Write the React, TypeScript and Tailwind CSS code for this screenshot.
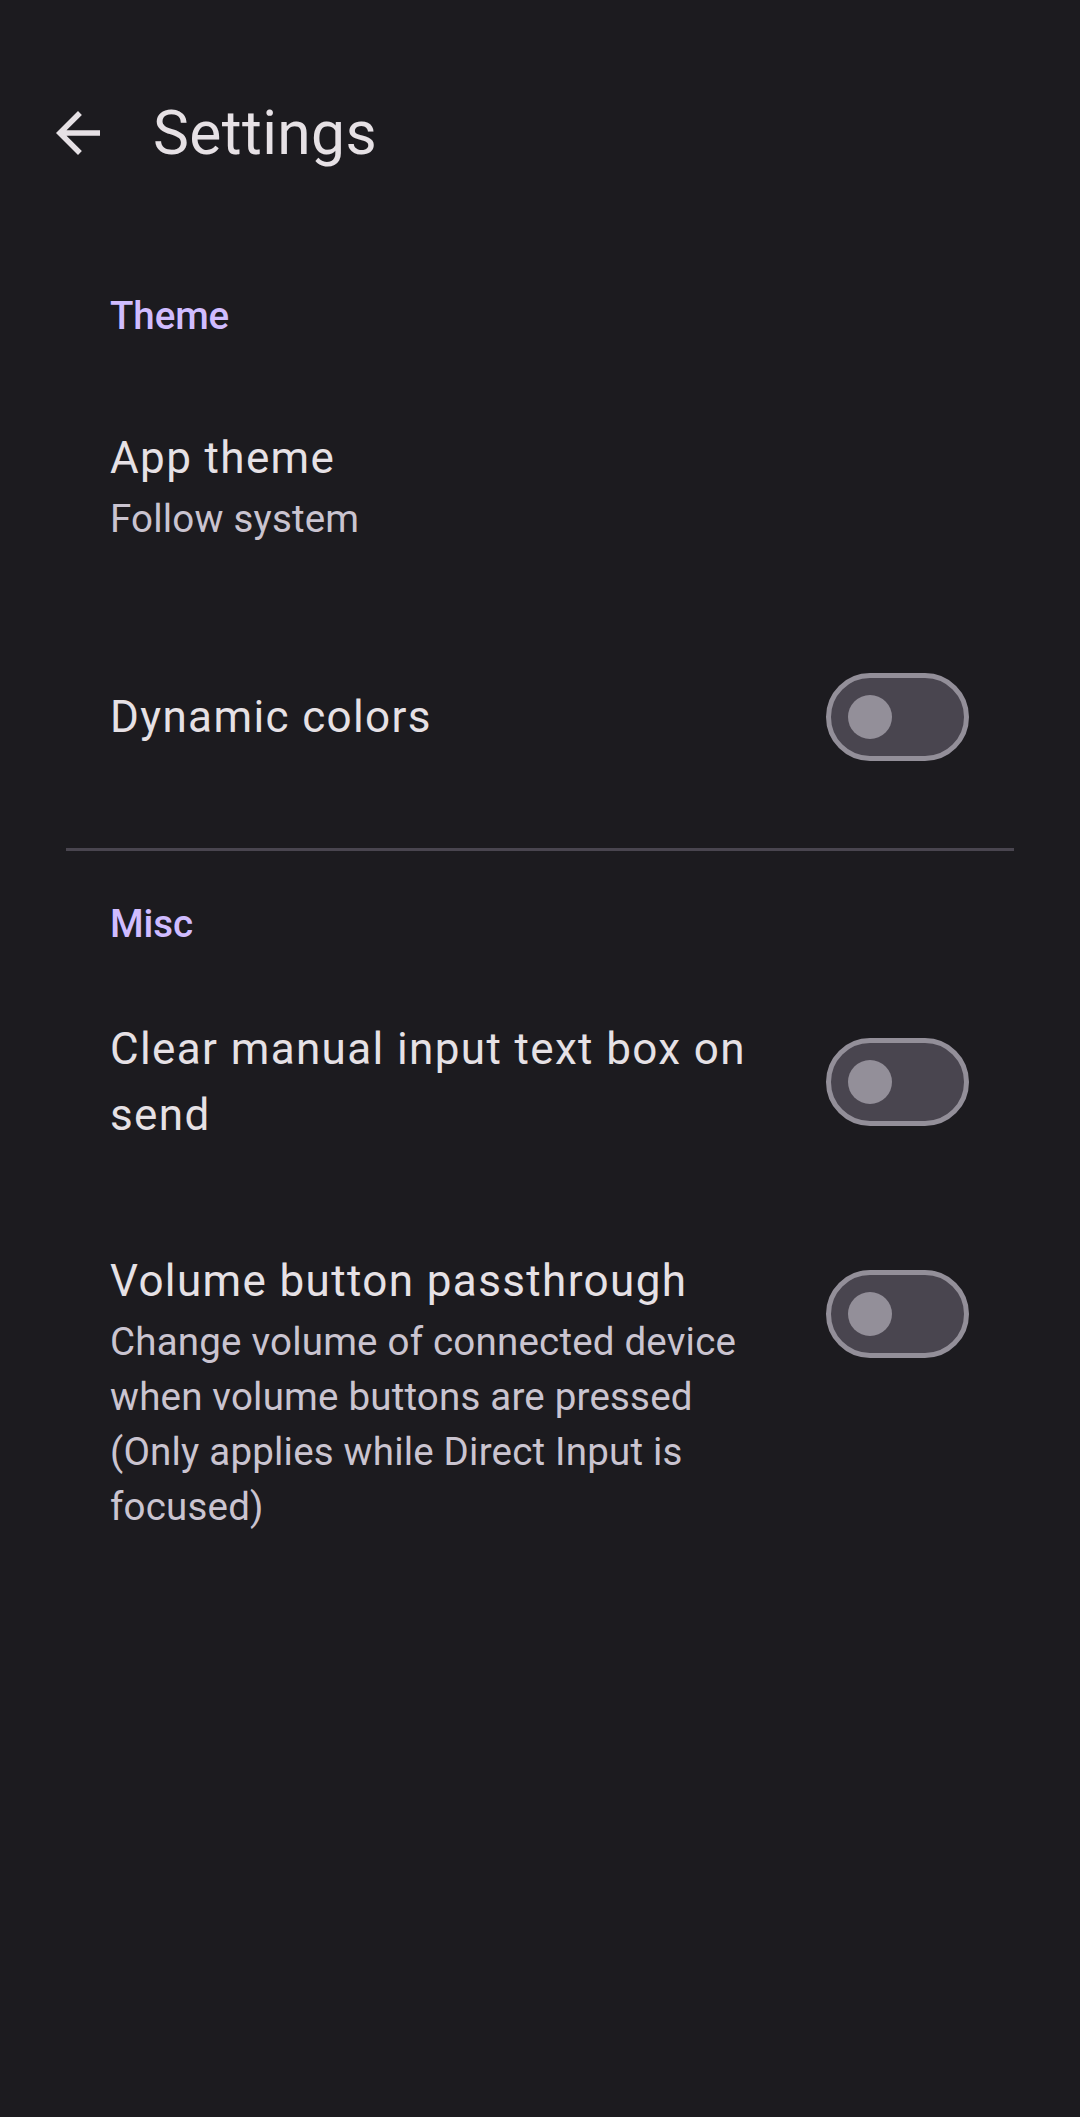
import React from 'react';

function Toggle() {
  return (
    <div className="relative h-[88px] w-[143px] shrink-0 rounded-full border-[5.5px] border-[#938F99] bg-[#49454F]">
      <div className="absolute left-[16.5px] top-1/2 h-[44px] w-[44px] -translate-y-1/2 rounded-full bg-[#938F99]" />
    </div>
  );
}

function SectionLabel({ children, className }: { children: React.ReactNode; className?: string }) {
  return (
    <div className={`pl-[110px] text-[38.5px] font-medium leading-[55px] tracking-[-0.1px] text-[#D0BCFF] ${className ?? ''}`}>
      {children}
    </div>
  );
}

function Title({ children }: { children: React.ReactNode }) {
  return <div className="text-[44px] leading-[66px] tracking-[1.375px] text-[#E6E1E5]">{children}</div>;
}

function Desc({ children }: { children: React.ReactNode }) {
  return <div className="text-[38.5px] leading-[55px] tracking-[0.2px] text-[#CAC4D0]">{children}</div>;
}

export default function App() {
  return (
    <div className="min-h-[2117px] w-full bg-[#1C1B1F]" style={{ fontFamily: 'Roboto, "Noto Sans", sans-serif' }}>
      {/* top bar */}
      <div className="pt-[45px]">
        <div className="flex h-[176px] items-center pl-[45px]">
          <svg viewBox="0 0 24 24" className="h-[66px] w-[66px] shrink-0" fill="#E6E1E5">
            <path d="M20 11H7.83l5.59-5.59L12 4l-8 8 8 8 1.41-1.41L7.83 13H20v-2z" />
          </svg>
          <div className="ml-[42px] text-[60.5px] leading-[77px] tracking-[0.4px] text-[#E6E1E5]">Settings</div>
        </div>
      </div>

      <SectionLabel className="mt-[67px]">Theme</SectionLabel>

      <div className="mt-[82px] pl-[110px] pr-[111px]">
        <Title>App theme</Title>
        <Desc>Follow system</Desc>
      </div>

      <div className="mt-[127px] flex items-center gap-[44px] pl-[110px] pr-[111px]">
        <div className="flex-1">
          <Title>Dynamic colors</Title>
        </div>
        <Toggle />
      </div>

      <div className="mx-[66px] mt-[87px] h-[3px] bg-[#49454F]" />

      <SectionLabel className="mt-[45px]">Misc</SectionLabel>

      <div className="mt-[65px] flex items-center gap-[44px] pl-[110px] pr-[111px]">
        <div className="flex-1">
          <Title>Clear manual input text box on send</Title>
        </div>
        <Toggle />
      </div>

      <div className="mt-[100px] flex items-start gap-[44px] pl-[110px] pr-[111px]">
        <div className="flex-1">
          <Title>Volume button passthrough</Title>
          <Desc>Change volume of connected device when volume buttons are pressed (Only applies while Direct Input is focused)</Desc>
        </div>
        <div className="mt-[22px]">
          <Toggle />
        </div>
      </div>
    </div>
  );
}
